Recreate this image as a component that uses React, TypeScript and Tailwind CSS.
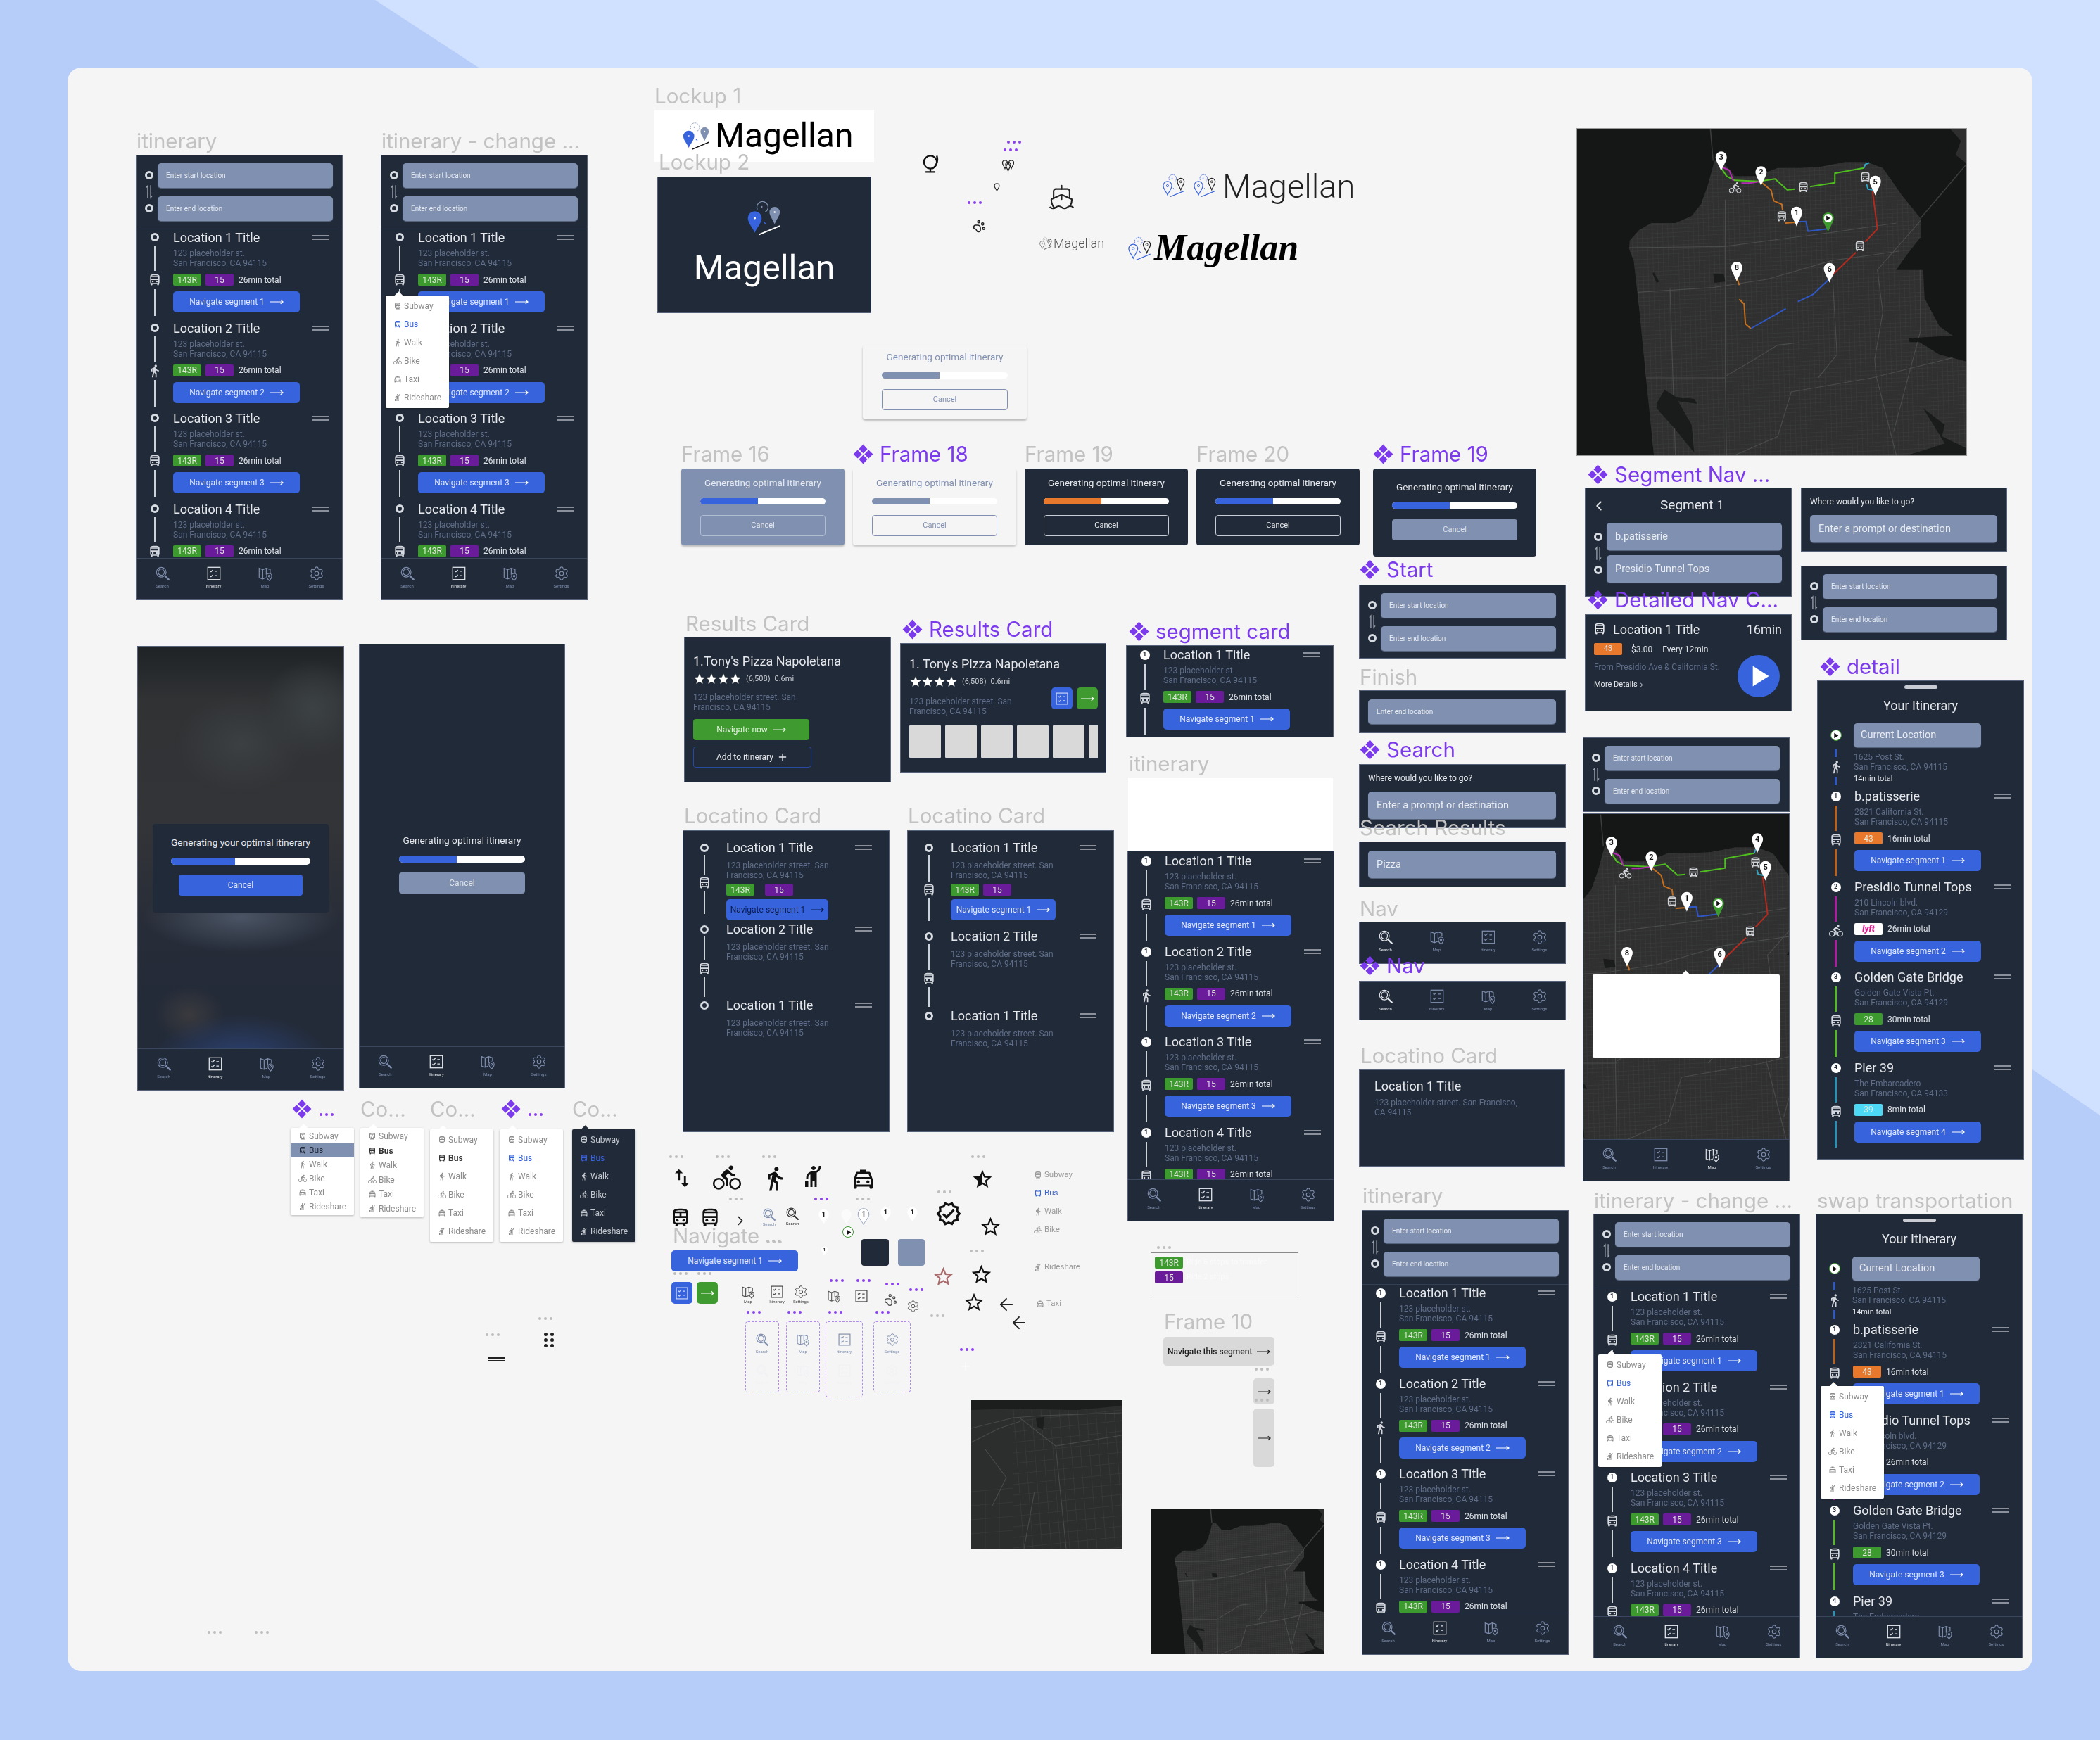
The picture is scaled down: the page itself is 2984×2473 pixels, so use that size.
import React from 'react';
import { Settings, Plus, ChevronLeft, ChevronRight, ArrowLeft, Ship, PawPrint } from 'lucide-react';
import {
  MdOutlineDirectionsBus, MdOutlineDirectionsSubway, MdDirectionsWalk, MdOutlineDirectionsBike,
  MdOutlineLocalTaxi, MdOutlineHail, MdSwapVert, MdStar, MdOutlineStarBorder, MdOutlineStarHalf,
  MdOutlineVerified, MdOutlineTrain, MdPlayArrow,
} from 'react-icons/md';

type K = React.ReactNode;

function At({ x, y, w, h, className = '', children }: { x: number; y: number; w?: number; h?: number; className?: string; children?: K }) {
  return <div className={'absolute ' + className} style={{ left: x, top: y, width: w, height: h }}>{children}</div>;
}

function Diamonds({ className = '' }: { className?: string }) {
  return (
    <svg viewBox="0 0 24 24" className={className} fill="#7c3aed">
      <path d="M12 .5 17 6l-5 5-5-5zM12 13l5 5-5 5.5-5-5.5zM5.500 7 10.500 12l-5 5L.5 12zM18.500 7l5 5-5 5-5-5z" />
    </svg>
  );
}

function LabelText({ text, purple }: { text: string; purple?: boolean }) {
  return (
    <div className={'flex items-center whitespace-nowrap h-[36px] text-[29.5px] leading-[36px] [font-family:Inter,sans-serif] ' + (purple ? 'text-[#7c3aed]' : 'text-[#c2c2c2]')}>
      {purple && <Diamonds className="w-[29px] h-[29px] mr-[9px] shrink-0" />}
      {text}
    </div>
  );
}

function Label({ x, y, text, purple }: { x: number; y: number; text: string; purple?: boolean }) {
  return <At x={x} y={y - 18}><LabelText text={text} purple={purple} /></At>;
}

function Dots({ x, y, purple }: { x: number; y: number; purple?: boolean }) {
  const c = purple ? 'bg-[#8b3ff0]' : 'bg-[#bdbdbd]';
  return (
    <At x={x} y={y - 2} className="flex gap-[4px]">
      <span className={'w-[4px] h-[4px] rounded-full ' + c} />
      <span className={'w-[4px] h-[4px] rounded-full ' + c} />
      <span className={'w-[4px] h-[4px] rounded-full ' + c} />
    </At>
  );
}

function SearchIcon({ className = '' }: { className?: string }) {
  return (
    <svg viewBox="0 0 24 24" fill="none" stroke="currentColor" strokeWidth="1.3" className={className}>
      <circle cx="10" cy="10" r="7.500" />
      <circle cx="10" cy="10" r="4.800" />
      <path d="M15.800 15.800 21.500 21.500" strokeWidth="2.600" strokeLinecap="round" />
    </svg>
  );
}
function MapIcon({ className = '' }: { className?: string }) {
  return (
    <svg viewBox="0 0 24 24" fill="none" stroke="currentColor" strokeWidth="1.3" className={className}>
      <path d="M13 18.500 8 20.500 2.500 18.500V4L8 6l5.500-2 6 2v5" />
      <path d="M8 6v14.500M13.500 4v10" />
      <path d="M18 23s-4-3.800-4-7a4 4 0 0 1 8 0c0 3.200-4 7-4 7z" />
      <circle cx="18" cy="16" r="1.300" />
    </svg>
  );
}
function ListIcon({ className = '' }: { className?: string }) {
  return (
    <svg viewBox="0 0 24 24" fill="none" stroke="currentColor" strokeWidth="1.400" className={className}>
      <rect x="2.500" y="2.500" width="19" height="19" />
      <path d="m6 8 1.500 1.500L10.500 6.500M13.500 8.500h4M6 15.500 7.500 17l3-3M13.500 15.500h4" />
    </svg>
  );
}
function GearIcon({ className = '' }: { className?: string }) {
  return <Settings className={className} strokeWidth={1.2} />;
}
function SwapV() {
  return (
    <svg viewBox="0 0 12 24" fill="none" stroke="#9aa0ac" strokeWidth="1.600" className="w-[10px] h-[21px]">
      <path d="M3.500 23V2L1 5M8.500 1v21l2.500-3" />
    </svg>
  );
}

function LongArrow({ className = '' }: { className?: string }) {
  return (
    <svg viewBox="0 0 20 8" fill="none" stroke="currentColor" strokeWidth="1.300" className={'w-[19px] h-[8px] shrink-0 ' + className}>
      <path d="M0 4h18.500M15.500 1l3.500 3-3.500 3" />
    </svg>
  );
}

function Ring() {
  return <span className="block w-[12px] h-[12px] rounded-full border-[3px] border-[#d7dbe2] shrink-0" />;
}
function Num({ n = '1' }: { n?: string }) {
  return <span className="flex items-center justify-center w-[14px] h-[14px] rounded-full bg-white text-[#202a38] text-[9px] font-bold shrink-0">{n}</span>;
}
function PlayMark() {
  return (
    <span className="flex items-center justify-center w-[16px] h-[16px] rounded-full bg-white border-[1.5px] border-[#3d9a2f] text-[#111] shrink-0">
      <MdPlayArrow className="w-[13px] h-[13px]" />
    </span>
  );
}

function Input({ children, big, className = '' }: { children: K; big?: boolean; className?: string }) {
  return (
    <div className={'flex items-center rounded-[5px] bg-[#8090b0] text-[#e9ecf2] pl-[12px] shadow-[0_1px_1px_#5d6a85] ' + (big ? 'text-[14.5px] ' : 'text-[10px] ') + className}>
      {children}
    </div>
  );
}

function Header({ a = 'Enter start location', b = 'Enter end location' }: { a?: string; b?: string }) {
  return (
    <div className="flex h-[105px] shrink-0 border-b border-[#333f55] pt-[11px] pl-[12px] pr-[13px]">
      <div className="flex flex-col items-center w-[12px] mr-[6px] pt-[11px]">
        <Ring />
        <div className="h-[35px] flex items-center"><SwapV /></div>
        <Ring />
      </div>
      <div className="flex-1 flex flex-col gap-[12px]">
        <Input className="h-[35px]">{a}</Input>
        <Input className="h-[35px]">{b}</Input>
      </div>
    </div>
  );
}

const NAV: Record<string, [string, (p: { className?: string }) => React.ReactElement]> = {
  s: ['Search', SearchIcon],
  i: ['Itinerary', ListIcon],
  m: ['Map', MapIcon],
  g: ['Settings', GearIcon],
};

function Nav({ order = 'simg', active = 'i', top = true }: { order?: string; active?: string; top?: boolean }) {
  return (
    <div className={'grid grid-cols-4 h-[59px] shrink-0 ' + (top ? 'border-t border-[#3b475e]' : '')}>
      {order.split('').map((k) => {
        const [name, Ico] = NAV[k];
        const on = k === active;
        return (
          <div key={k} className={'flex flex-col items-center pt-[10px] ' + (on ? 'text-[#e4e7ec]' : 'text-[#7f8eaf]')}>
            <Ico className="w-[22px] h-[22px]" />
            <span className="text-[6px] leading-[9px] mt-[2px]">{name}</span>
          </div>
        );
      })}
    </div>
  );
}

function Badge({ t, c }: { t: K; c: string }) {
  return <span className={'flex items-center justify-center w-[40px] h-[17px] rounded-[2px] text-[12px] text-[#dfe6da] ' + c}>{t}</span>;
}

const GREEN = 'bg-[#3d9a2f]';
const PURPLE = 'bg-[#6a1b9a]';

function Navigate({ n, className = 'w-[180px]', dark }: { n: string; className?: string; dark?: boolean }) {
  return (
    <div className={'flex items-center justify-center gap-[8px] h-[30px] rounded-[5px] bg-[#3763dc] text-[12px] whitespace-nowrap ' + (dark ? 'text-[#0b1b4a] ' : 'text-[#e3e9fb] ') + className}>
      <span>Navigate segment {n}</span>
      <LongArrow className={dark ? 'text-[#0b1b4a]' : 'text-white'} />
    </div>
  );
}

function Menu() {
  return (
    <div className="flex flex-col gap-[3px] pt-[8px] w-[24px]">
      <span className="h-[2px] bg-[#8b909a]" />
      <span className="h-[2px] bg-[#8b909a]" />
    </div>
  );
}

const ICONS: Record<string, (p: { className?: string }) => React.ReactElement> = {
  bus: MdOutlineDirectionsBus as never,
  sub: MdOutlineDirectionsSubway as never,
  walk: MdDirectionsWalk as never,
  bike: MdOutlineDirectionsBike as never,
};

function Row({ marker, title, a1, a2, icon = 'bus', line = 'bg-[#cdd1d8]', badges, time = '26min total', n, upto = 4 }: {
  marker: K; title: string; a1?: string; a2?: string; icon?: string; line?: string; badges?: K; time?: string; n: string; upto?: number;
}) {
  const I = ICONS[icon];
  return (
    <div className="flex h-[128.6px] shrink-0 pl-[18px] pr-[18px]">
      <div className="flex flex-col items-center w-[15px] mr-[19px] pt-[5px]">
        {marker}
        <span className={'w-[2px] h-[36px] mt-[6px] ' + line} />
        <I className="w-[20px] h-[20px] my-[3px] text-[#d5d8de] shrink-0" />
        <span className={'w-[2px] h-[38px] ' + line} />
      </div>
      <div className="flex-1 min-w-0">
        <div className="flex justify-between h-[24px]">
          <span className="text-[18px] leading-[24px] text-[#e6e8ec] whitespace-nowrap">{title}</span>
          <Menu />
        </div>
        <div className="mt-[3px] text-[12px] leading-[14px] text-[#5f6d8a] whitespace-nowrap">
          <div>{a1 ?? '123 placeholder st.'}</div>
          {upto > 1 && <div>{a2 ?? 'San Francisco, CA 94115'}</div>}
        </div>
        {upto > 2 && (
          <div className="flex items-center gap-[6px] mt-[8px] h-[17px]">
            {badges ?? (<><Badge t="143R" c={GREEN} /><Badge t="15" c={PURPLE} /></>)}
            <span className="text-[12px] text-[#dfe2e7] ml-[1px]">{time}</span>
          </div>
        )}
        {upto > 3 && <Navigate n={n} className="w-[180px] mt-[8px]" />}
      </div>
    </div>
  );
}

const TRANSPORT: [string, any][] = [
  ['Subway', MdOutlineDirectionsSubway], ['Bus', MdOutlineDirectionsBus], ['Walk', MdDirectionsWalk],
  ['Bike', MdOutlineDirectionsBike], ['Taxi', MdOutlineLocalTaxi], ['Rideshare', MdOutlineHail],
];

function Dropdown({ item = 'h-[26px]', bus = 'text-[#3763dc]', bg = 'bg-white', text = 'text-[#8b8b8b]', caret = 'bg-white', className = '' }: {
  item?: string; bus?: string; bg?: string; text?: string; caret?: string; className?: string;
}) {
  return (
    <div className={'w-[90px] flex flex-col pt-[2px] pb-[2px] rounded-[2px] shadow-[0_1px_3px_rgba(0,0,0,.25)] relative ' + bg + ' ' + className}>
      <span className={'absolute -top-[4px] left-[14px] w-[9px] h-[9px] rotate-45 ' + caret} />
      {TRANSPORT.map(([t, I]) => (
        <div key={t} className={'relative flex items-center pl-[11px] gap-[3px] text-[12px] whitespace-nowrap ' + item + ' ' + (t === 'Bus' ? bus : text)}>
          <I className="w-[12px] h-[12px] shrink-0" />{t}
        </div>
      ))}
    </div>
  );
}

function Itin({ num, menu, x, y, nav = 'i', h = 631, white }: { num?: boolean; menu?: boolean; x: number; y: number; nav?: string; h?: number; white?: boolean }) {
  const marker = num ? <Num /> : <Ring />;
  const L = ['Location 1 Title', 'Location 2 Title', 'Location 3 Title', 'Location 4 Title'];
  return (
    <At x={x} y={y} w={292} h={h} className="bg-[#212a38] flex flex-col overflow-hidden shadow-[0_0_0_1px_#56627a]">
      {!white && <Header />}
      <div className={'flex-1 min-h-0 overflow-hidden relative ' + (white ? 'pt-[2px]' : '')}>
        {L.map((t, i) => (
          <Row key={t} marker={marker} title={t} icon={i === 1 ? 'walk' : 'bus'} n={String(i + 1)} upto={i === 3 ? 3 : 4} />
        ))}
        {menu && <Dropdown className="!absolute left-[6px] top-[94px]" />}
      </div>
      <Nav active={nav} />
    </At>
  );
}

const DETAIL = [
  { t: 'b.patisserie', a1: '2821 California St.', a2: 'San Francisco, CA 94115', i: 'bus', l: 'bg-[#b8621f]', b: <Badge t="43" c="bg-[#e8792c]" />, tm: '16min total' },
  { t: 'Presidio Tunnel Tops', a1: '210 Lincoln blvd.', a2: 'San Francisco, CA 94129', i: 'bike', l: 'bg-[#a8209a]', b: <span className="flex items-center justify-center w-[40px] h-[17px] bg-white rounded-[2px] text-[#e0188a] text-[12px] font-black italic">lyft</span>, tm: '26min total' },
  { t: 'Golden Gate Bridge', a1: 'Golden Gate Vista Pt.', a2: 'San Francisco, CA 94129', i: 'bus', l: 'bg-[#5ab52e]', b: <Badge t="28" c={GREEN} />, tm: '30min total' },
  { t: 'Pier 39', a1: 'The Embarcadero', a2: 'San Francisco, CA 94133', i: 'bus', l: 'bg-[#2e8fb0]', b: <Badge t="39" c="bg-[#4dd9f5]" />, tm: '8min total' },
];

function Detail({ x, y, h, nav, menu }: { x: number; y: number; h: number; nav?: boolean; menu?: boolean }) {
  return (
    <At x={x} y={y} w={292} h={h} className="bg-[#212a38] flex flex-col overflow-hidden shadow-[0_0_0_1px_#56627a]">
      <div className="h-[152px] shrink-0 flex flex-col items-center">
        <span className="mt-[6px] w-[47px] h-[5px] rounded-full bg-[#c9ccd2]" />
        <span className="mt-[12px] text-[18px] leading-[24px] text-[#e6e8ec]">Your Itinerary</span>
        <div className="w-full flex pl-[18px] mt-[13px]">
          <div className="flex flex-col items-center w-[15px] mr-[18px]">
            <div className="h-[34px] flex items-center"><PlayMark /></div>
            <span className="w-[3px] h-[12px] mt-[2px] bg-[#3058c0]" />
            <MdDirectionsWalk className="w-[20px] h-[22px] my-[3px] text-[#d5d8de] shrink-0" />
            <span className="w-[3px] h-[12px] bg-[#3058c0]" />
          </div>
          <div className="flex-1">
            <Input big className="w-[181px] h-[34px] !pl-[10px]">Current Location</Input>
            <div className="mt-[7px] text-[12px] leading-[14px] text-[#5f6d8a] whitespace-nowrap">
              <div>1625 Post St.</div><div>San Francisco, CA 94115</div>
            </div>
            <div className="mt-[3px] text-[11px] leading-[14px] text-[#e2e4e8]">14min total</div>
          </div>
        </div>
      </div>
      <div className="flex-1 min-h-0 overflow-hidden relative">
        {DETAIL.map((d, i) => (
          <Row key={d.t} marker={<Num n={String(i + 1)} />} title={d.t} a1={d.a1} a2={d.a2} icon={d.i} line={d.l + ' !w-[3px]'} badges={d.b} time={d.tm} n={String(i + 1)} upto={nav && i === 3 ? 1 : 4} />
        ))}
        {menu && <Dropdown className="!absolute left-[6px] top-[92px]" />}
      </div>
      {nav && <Nav />}
    </At>
  );
}

function Gen({ size = 'w-[232px] h-[109px]', bg, text, fill = 'bg-[#3763dc]', btn, pt = 'pt-[12px]', shadow = '' }: {
  size?: string; bg: string; text: string; fill?: string; btn: string; pt?: string; shadow?: string;
}) {
  return (
    <div className={'flex flex-col rounded-[4px] px-[27px] ' + size + ' ' + bg + ' ' + pt + ' ' + shadow}>
      <div className={'text-[13.5px] leading-[16px] text-center whitespace-nowrap ' + text}>Generating optimal itinerary</div>
      <div className="flex h-[9px] mt-[14px] rounded-full overflow-hidden bg-white shrink-0"><span className={'w-[46%] ' + fill} /></div>
      <div className={'flex items-center justify-center h-[30px] mt-[15px] rounded-[4px] text-[11px] ' + btn}>Cancel</div>
    </div>
  );
}

function tear(cx: number, cy: number, r: number, h: number) {
  return `M${cx} ${cy + h}C${cx - r * 0.35} ${cy + h * 0.6} ${cx - r} ${cy + r * 0.7} ${cx - r} ${cy}A${r} ${r} 0 1 1 ${cx + r} ${cy}C${cx + r} ${cy + r * 0.7} ${cx + r * 0.35} ${cy + h * 0.6} ${cx} ${cy + h}Z`;
}

function Logo({ outline, dark, lineColor = '#111', className = '' }: { outline?: boolean; dark?: boolean; lineColor?: string; className?: string }) {
  return (
    <svg viewBox="0 0 44 44" className={className} fill="none">
      <path d="M14 12a6.500 6.500 0 1 1 9 3" stroke={outline ? '#3763dc' : '#8090b0'} strokeWidth="1" strokeDasharray={dark ? '0' : '2 1'} />
      <circle cx="19" cy="9" r="1" fill={outline ? '#3763dc' : '#8090b0'} />
      {outline ? (
        <>
          <path d={tear(11, 22, 7.500, 16)} stroke="#3763dc" strokeWidth="1.500" />
          <circle cx="11" cy="22" r="2" stroke="#3763dc" />
          <path d={tear(34, 15, 6, 14)} stroke="#222" strokeWidth="1.500" />
          <circle cx="34" cy="15" r="1.800" stroke="#222" />
        </>
      ) : (
        <>
          <path d={tear(11, 22, 8, 17)} fill="#3763dc" />
          <circle cx="11" cy="22" r="1.300" fill="#fff" />
          <path d={tear(34, 15, 6, 14)} fill="#8090b0" />
          <circle cx="34" cy="15" r="1" fill="#fff" />
        </>
      )}
      <path d="M21 26l2.500 2.500" stroke="#3763dc" strokeWidth="1.200" />
      <path d="M16 41 40 31" stroke={lineColor} strokeWidth="1.500" />
    </svg>
  );
}

const LAND = 'M340 1430L310 1090 285 800 265 600 248 550 250 515 285 470 330 440 420 440 480 410 515 360 540 280 565 175 590 170 640 240 720 240 800 205 880 205 960 200 1050 180 1130 180 1190 205 1260 320 1330 420 1330 500 1270 590 1240 640 1340 640 1345 760 1400 880 1450 920 1300 930 1400 1000 1500 1030V1430Z';
const MAJOR = [
  'M250 545L600 540 1000 480 1240 440', 'M280 735L560 715 760 680 1000 600 1250 560', 'M605 340V1100L610 1430',
  'M1165 1090L1240 1430', 'M1165 1090 1160 1020 1190 820 1170 640 1330 430', 'M1500 1000 1150 1100 1000 1130 850 1160 800 1350 640 1430',
  'M1330 500V900L1230 1330', 'M310 1100H610', 'M610 1090 700 1030 800 960 880 950', 'M400 720 420 1430', 'M1000 600 1020 1000 950 1100',
];
const ROUTES: [string, string][] = [
  ['#4fbf1f', 'M590 205 610 240 640 258 730 262 790 252 835 298 865 295M920 285 1012 268V228L1120 205'],
  ['#b32cb0', 'M590 200 620 215 635 260M665 270 695 270 738 262'],
  ['#c6701f', 'M738 265 775 300 785 345 815 360 818 385M828 440 870 437'],
  ['#2f57c4', 'M870 435 905 433 912 475 985 465'],
  ['#2fa7c9', 'M1120 205 1125 190 1140 183M1130 275 1135 295 1160 300'],
  ['#b52a1f', 'M1152 305 1170 465 1125 520M1090 565 995 670'],
  ['#2f57c4', 'M995 675 930 745 875 775M830 805 700 890'],
  ['#c6701f', 'M648 670 657 705M657 765 675 785 680 870 700 890'],
];
const SX = 1 / 0.3827;
const SY = 1 / 0.3333;

function MapPin({ x, y, n, green }: { x: number; y: number; n?: string; green?: boolean }) {
  return (
    <g transform={`translate(${x} ${y}) scale(${SX} ${SY})`}>
      <path d={tear(0, -2, 8, 20)} fill={green ? '#3d9a2f' : '#fff'} />
      {green && <circle cx="0" cy="-2" r="6" fill="#fff" />}
      {green ? <path d="M-2.500-5.500 3-2l-5.500 3.500z" fill="#111" /> :
        <text x="0" y="2" textAnchor="middle" fontSize="11" fontWeight="700" fill="#111" fontFamily="Roboto">{n}</text>}
    </g>
  );
}
function MapGlyph({ x, y, bike }: { x: number; y: number; bike?: boolean }) {
  const I = bike ? MdOutlineDirectionsBike : MdOutlineDirectionsBus;
  return (
    <g transform={`translate(${x} ${y}) scale(${SX} ${SY})`}>
      <foreignObject x="-9" y="-9" width="18" height="18"><I className="w-[18px] h-[18px] text-[#cfd2d6]" /></foreignObject>
    </g>
  );
}

function SFMap({ id, routes, four }: { id: string; routes?: boolean; four?: boolean }) {
  const vs: number[] = [];
  for (let i = 0; i < 68; i++) vs.push(250 + i * 19);
  const hs: number[] = [];
  for (let i = 0; i < 72; i++) hs.push(190 + i * 18);
  return (
    <svg viewBox="55 38 1445 1392" preserveAspectRatio="none" className="block w-full h-full bg-[#151717]">
      <clipPath id={id}><path d={LAND} /></clipPath>
      <path d="M550 40 560 175M1330 420 1500 190" stroke="#3d3d3d" strokeWidth="1.500" vectorEffect="non-scaling-stroke" />
      <path d="M1440 38H1500V185L1460 150 1480 90Z" fill="#2e2e2e" />
      <path d={LAND} fill="#303030" />
      <g clipPath={`url(#${id})`} fill="none">
        <g stroke="#3f4040" strokeWidth=".5">
          {vs.map((x) => <path key={x} d={`M${x} 100L${x + 30} 1430`} vectorEffect="non-scaling-stroke" />)}
          {hs.map((y) => <path key={y} d={`M240 ${y + 30}L1500 ${y - 40}`} vectorEffect="non-scaling-stroke" />)}
        </g>
        {MAJOR.map((d) => <path key={d} d={d} stroke="#4a4b4b" strokeWidth="1.200" vectorEffect="non-scaling-stroke" />)}
        <path d="M350 1210 380 1150 420 1180 490 1190 500 1210 430 1200 480 1300 490 1420 420 1320 350 1230Z" fill="#1a1b1b" />
        <path d="M1340 1230 1420 1300 1410 1350 1500 1400V1430H1280L1340 1410 1420 1380Z" fill="#1a1b1b" />
        <path d="M1285 930H1400L1400 948H1290Z" fill="#151717" />
        <path d="M560 655 600 660 605 690 565 695ZM340 650 360 690 350 695 335 655Z" fill="#1a1b1b" />
      </g>
      {routes && (
        <>
          <g fill="none" strokeWidth="2" strokeLinejoin="round">
            {ROUTES.map(([c, d]) => <path key={d} d={d} stroke={c} vectorEffect="non-scaling-stroke" />)}
          </g>
          <MapGlyph x={895} y={288} /><MapGlyph x={815} y={412} /><MapGlyph x={1125} y={245} /><MapGlyph x={1105} y={540} /><MapGlyph x={642} y={290} bike />
          <MapPin x={590} y={165} n="3" /><MapPin x={738} y={228} n="2" /><MapPin x={870} y={400} n="1" /><MapPin x={1162} y={268} n="5" />
          <MapPin x={648} y={635} n="8" /><MapPin x={992} y={640} n="6" /><MapPin x={987} y={425} green />
          {four && <MapPin x={1132} y={150} n="4" />}
        </>
      )}
    </svg>
  );
}

function Tile() {
  const vs: number[] = [];
  for (let i = 0; i < 18; i++) vs.push(i * 13);
  const hs: number[] = [];
  for (let i = 0; i < 14; i++) hs.push(20 + i * 15);
  return (
    <svg viewBox="0 0 214 211" className="block w-full h-full bg-[#2c2d2d]">
      <path d="M0 0H214V8L150 14 60 12 0 14Z" fill="#1c1d1d" />
      <g stroke="#3f4040" strokeWidth=".6" fill="none">
        {vs.map((x) => <path key={x} d={`M${x + 60} 14L${x + 75} 211`} />)}
        {hs.map((y) => <path key={y} d={`M60 ${y + 10}L214 ${y - 6}`} />)}
        <path d="M0 130 60 125M0 150 60 145M0 170 60 165M0 190 60 185M20 130V211M40 130V211" />
      </g>
      <g stroke="#484949" strokeWidth="1.200" fill="none">
        <path d="M0 40 60 25 100 22 214 18M70 26 120 65 214 50M0 60 40 40 70 30M30 150 50 110 20 70M120 65 135 211M90 130 75 211" />
      </g>
      <path d="M92 25 104 24 102 42 94 38Z" fill="#1c1d1d" />
    </svg>
  );
}

function SmallPin({ x, y, n = '1', w = 17, h = 22, fill = '#fff', stroke }: { x: number; y: number; n?: string; w?: number; h?: number; fill?: string; stroke?: string }) {
  return (
    <At x={x} y={y} w={w} h={h}>
      <svg viewBox="0 0 18 24" className="block w-full h-full">
        <path d={tear(9, 8.500, 7.800, 15)} fill={fill} stroke={stroke} strokeWidth=".8" />
        {n && <text x="9" y="12" textAnchor="middle" fontSize="10" fontWeight="700" fill="#111" fontFamily="Roboto">{n}</text>}
      </svg>
    </At>
  );
}

function Stars() {
  return (
    <span className="flex -space-x-[1px] text-white">
      <MdStar className="w-[18px] h-[18px]" /><MdStar className="w-[18px] h-[18px]" /><MdStar className="w-[18px] h-[18px]" /><MdStar className="w-[18px] h-[18px]" />
    </span>
  );
}

function ListSquare({ x, y, w = 30, h = 31 }: { x: number; y: number; w?: number; h?: number }) {
  return (
    <At x={x} y={y} w={w} h={h} className="flex items-center justify-center rounded-[5px] bg-[#3763dc] text-[#cdd9f7]">
      <ListIcon className="w-[20px] h-[20px]" />
    </At>
  );
}
function GoSquare({ x, y, w = 30, h = 31 }: { x: number; y: number; w?: number; h?: number }) {
  return (
    <At x={x} y={y} w={w} h={h} className="flex items-center justify-center rounded-[5px] bg-[#3f9a2f] text-white">
      <LongArrow />
    </At>
  );
}

function Dashed({ size, icon: I, label }: { size: string; icon: (p: { className?: string }) => React.ReactElement; label: string }) {
  return (
    <div className={'rounded-[4px] border border-dashed border-[#b48af0] flex flex-col items-center pt-[14px] text-[#8090b0] ' + size}>
      <I className="w-[20px] h-[22px]" />
      <span className="text-[6px] leading-[10px] mt-[1px]">{label}</span>
      <div className="mt-[11px] flex flex-col items-center text-[#f0f1f4]">
        <I className="w-[20px] h-[22px]" />
        <span className="text-[6px] leading-[10px] mt-[1px]">{label}</span>
      </div>
    </div>
  );
}

function TextItem({ x, y, t, I, c = 'text-[#9a9a9a]' }: { x: number; y: number; t: string; I: any; c?: string }) {
  return (
    <At x={x} y={y - 7} className={'flex items-center h-[14px] gap-[3px] text-[11.5px] whitespace-nowrap ' + c}>
      <I className="w-[12px] h-[12px]" />{t}
    </At>
  );
}

function LocCard({ x, btn, dark }: { x: number; btn: string; dark?: boolean }) {
  const Addr = () => (
    <div className="mt-[6px] text-[12px] leading-[14px] text-[#5f6d8a] whitespace-nowrap">
      <div>123 placeholder street. San</div><div>Francisco, CA 94115</div>
    </div>
  );
  const Title = ({ t }: { t: string }) => (
    <div className="flex justify-between pr-[24px]">
      <span className="text-[18px] leading-[24px] text-[#e6e8ec]">{t}</span>
      <Menu />
    </div>
  );
  const V = ({ c }: { c: string }) => <span className={'w-[2px] bg-[#cdd1d8] ' + c} />;
  const B = () => <MdOutlineDirectionsBus className="w-[20px] h-[20px] my-[2px] text-[#d5d8de] shrink-0" />;
  const rows = dark
    ? [['h-[116px]', 'h-[28px]', 'h-[32px]'], ['h-[108px]', 'h-[38px]', 'h-[32px]'], ['h-[90px]', '', '']]
    : [['h-[126px]', 'h-[38px]', 'h-[32px]'], ['h-[113px]', 'h-[38px]', 'h-[28px]'], ['h-[90px]', '', '']];
  return (
    <At x={x} y={1181} w={292} h={427} className="bg-[#212a38] pt-[12px] pl-[24px] shadow-[0_0_0_1px_#56627a]">
      {rows.map((r, i) => (
        <div key={i} className={'flex ' + r[0]}>
          <div className="flex flex-col items-center w-[12px] mr-[25px] pt-[6px]">
            <Ring />
            {r[1] && <><V c={r[1] + ' mt-[4px]'} /><B /><V c={r[2]} /></>}
          </div>
          <div className="flex-1">
            <Title t={i === 2 ? 'Location 1 Title' : `Location ${i + 1} Title`} />
            <Addr />
            {i === 0 && (
              <>
                <div className={'flex mt-[5px] ' + (dark ? 'gap-[15px]' : 'gap-[6px]')}><Badge t="143R" c={GREEN} /><Badge t="15" c={PURPLE} /></div>
                <Navigate n="1" className={btn + ' mt-[5px]'} dark={dark} />
              </>
            )}
          </div>
        </div>
      ))}
    </At>
  );
}

function IconLabel({ x, y, c, name, I }: { x: number; y: number; c: string; name: string; I: (p: { className?: string }) => React.ReactElement }) {
  return (
    <At x={x} y={y} w={22} className={'flex flex-col items-center ' + c}>
      <I className="w-[20px] h-[20px]" />
      <span className="text-[6px] leading-[8px] whitespace-nowrap">{name}</span>
    </At>
  );
}

export default function App() {
  return (
    <div className="relative w-[2984px] h-[2473px] overflow-hidden bg-[#b6cdf9] [font-family:Roboto,sans-serif]">
      <div className="absolute inset-0 bg-[#d0e0ff] [clip-path:polygon(533px_0,2984px_0,2984px_1585px,2888px_1520px,2000px_1000px,1000px_305px)]" />
      <div className="absolute left-[96px] top-[96px] w-[2792px] h-[2279px] rounded-[20px] bg-[#f5f5f5]" />
      <div className="absolute inset-0 blur-[0.7px]">
        {/* itinerary top */}
        <Label x={194} y={200} text="itinerary" />
        <Label x={542} y={200} text="itinerary - change ..." />
        <Itin x={194} y={221} />
        <Itin x={542} y={221} menu />

        {/* lockups */}
        <Label x={930} y={136} text="Lockup 1" />
        <At x={930} y={156} w={312} h={74} className="bg-white flex items-center pl-[38px] gap-[5px]">
          <Logo className="w-[43px] h-[43px]" />
          <span className="text-[48px] leading-[54px] text-black">Magellan</span>
        </At>
        <Label x={936} y={230} text="Lockup 2" />
        <At x={935} y={252} w={302} h={192} className="bg-[#212a38] flex flex-col items-center pt-[31px] shadow-[0_0_0_1px_#56627a]">
          <Logo dark lineColor="#fff" className="w-[54px] h-[54px]" />
          <span className="text-[49px] leading-[54px] text-white mt-[17px]">Magellan</span>
        </At>
        <At x={1308} y={218} w={28} h={32}>
          <svg viewBox="0 0 24 28" fill="none" stroke="#111" strokeWidth="2" className="block w-full h-full">
            <circle cx="12" cy="11" r="8" /><path d="M6 23h12M12 19v4M20 3c2 6 0 13-6 16" />
          </svg>
        </At>
        <Dots x={1431} y={202} purple /><Dots x={1426} y={213} purple />
        <At x={1423} y={226} w={19} h={18}>
          <svg viewBox="0 0 20 20" fill="none" stroke="#222" strokeWidth="1.400" className="block w-full h-full">
            <path d={tear(5, 6, 4, 9)} /><path d={tear(15, 6, 4, 9)} /><path d={tear(10, 9, 4, 10)} />
          </svg>
        </At>
        <At x={1411} y={260} w={11} h={12}>
          <svg viewBox="0 0 12 14" fill="none" stroke="#333" strokeWidth="1.400" className="block w-full h-full"><path d={tear(6, 5, 4, 8)} /></svg>
        </At>
        <Dots x={1375} y={288} purple />
        <At x={1382} y={312} w={19} h={19} className="text-[#222]"><PawPrint className="w-full h-full" strokeWidth={2} /></At>
        <At x={1489} y={260} w={39} h={40} className="text-[#222]"><Ship className="w-full h-full" strokeWidth={1.300} /></At>
        <At x={1476} y={336} className="flex items-center gap-[1px] text-[#555]">
          <Logo outline className="w-[20px] h-[20px] grayscale" />
          <span className="text-[18px] leading-[20px] font-light">Magellan</span>
        </At>
        <At x={1650} y={245} className="flex items-center gap-[8px]">
          <Logo outline lineColor="#3763dc" className="w-[36px] h-[38px]" />
          <Logo outline lineColor="#3763dc" className="w-[36px] h-[38px]" />
        </At>
        <At x={1737} y={235} className="text-[47px] leading-[60px] font-light text-[#222] whitespace-nowrap">Magellan</At>
        <At x={1601} y={335}><Logo outline lineColor="#3763dc" className="w-[37px] h-[37px]" /></At>
        <At x={1640} y={316} className="text-[52px] leading-[72px] font-bold italic text-black whitespace-nowrap [font-family:'Liberation_Serif',serif]">Magellan</At>

        {/* generating */}
        <At x={1226} y={491}>
          <Gen size="w-[233px] h-[105px]" bg="bg-[#f5f5f5]" text="text-[#8090b0]" fill="bg-[#8090b0]" btn="border border-[#8090b0] text-[#8090b0]" pt="pt-[8px]" shadow="shadow-[0_2px_3px_rgba(0,0,0,.25)]" />
        </At>
        <At x={968} y={627} className="flex gap-[12px]">
          <div className="flex flex-col gap-[3px]">
            <LabelText text="Frame 16" />
            <Gen bg="bg-[#8090b0]" text="text-[#e6e9ef]" btn="border border-[#b3bdd2] text-[#e6e9ef]" shadow="shadow-[0_2px_3px_rgba(0,0,0,.25)]" />
          </div>
          <div className="flex flex-col gap-[3px]">
            <LabelText text="Frame 18" purple />
            <Gen bg="bg-[#f5f5f5]" text="text-[#8090b0]" fill="bg-[#8090b0]" btn="border border-[#8090b0] text-[#8090b0]" shadow="shadow-[0_2px_3px_rgba(0,0,0,.2)]" />
          </div>
          <div className="flex flex-col gap-[3px]">
            <LabelText text="Frame 19" />
            <Gen bg="bg-[#212a38]" text="text-[#e6e8ec]" fill="bg-[#e8792c]" btn="border border-[#c9ccd2] text-[#e6e8ec]" />
          </div>
          <div className="flex flex-col gap-[3px]">
            <LabelText text="Frame 20" />
            <Gen bg="bg-[#212a38]" text="text-[#e6e8ec]" btn="border border-[#c9ccd2] text-[#e6e8ec]" />
          </div>
          <div className="flex flex-col gap-[3px] ml-[7px]">
            <LabelText text="Frame 19" purple />
            <Gen size="w-[232px] h-[125px]" bg="bg-[#212a38]" text="text-[#e6e8ec]" btn="bg-[#8090b0] text-[#dfe3ea]" pt="pt-[18px]" />
          </div>
        </At>

        {/* results */}
        <Label x={974} y={886} text="Results Card" />
        <At x={973} y={906} w={292} h={205} className="bg-[#212a38] pt-[22px] px-[12px] shadow-[0_0_0_1px_#56627a]">
          <div className="text-[18px] leading-[24px] text-[#e6e8ec] whitespace-nowrap">1.Tony's Pizza Napoletana</div>
          <div className="flex items-center gap-[6px] mt-[4px] text-[11px] text-[#c9ccd2]"><Stars /><span>(6,508)</span><span>0.6mi</span></div>
          <div className="mt-[10px] text-[12px] leading-[14px] text-[#5f6d8a]"><div>123 placeholder street. San</div><div>Francisco, CA 94115</div></div>
          <div className="flex items-center justify-center gap-[7px] w-[165px] h-[30px] mt-[10px] rounded-[4px] bg-[#3f9a2f] text-[12px] text-[#e6f0e3]">Navigate now <LongArrow /></div>
          <div className="flex items-center justify-center gap-[5px] w-[168px] h-[30px] mt-[9px] rounded-[4px] border border-[#274a9e] text-[12px] text-[#e6e8ec]">Add to itinerary <Plus className="w-[16px] h-[16px]" /></div>
        </At>
        <Label x={1282} y={894} text="Results Card" purple />
        <At x={1280} y={915} w={291} h={182} className="bg-[#212a38] pt-[17px] pl-[12px] pr-[11px] shadow-[0_0_0_1px_#56627a] overflow-hidden">
          <div className="text-[18px] leading-[24px] text-[#e6e8ec] whitespace-nowrap">1. Tony's Pizza Napoletana</div>
          <div className="flex items-center gap-[6px] mt-[4px] text-[11px] text-[#c9ccd2]"><Stars /><span>(6,508)</span><span>0.6mi</span></div>
          <div className="mt-[12px] text-[12px] leading-[14px] text-[#5f6d8a]"><div>123 placeholder street. San</div><div>Francisco, CA 94115</div></div>
          <div className="flex gap-[6px] mt-[13px] overflow-hidden">
            {[0, 1, 2, 3, 4, 5].map((i) => <span key={i} className="w-[45px] h-[46px] shrink-0 bg-[#d9d9d9] rounded-[1px]" />)}
          </div>
        </At>
        <ListSquare x={1494} y={977} /><GoSquare x={1530} y={977} />

        <Label x={1604} y={897} text="segment card" purple />
        <At x={1601} y={918} w={293} h={129} className="bg-[#212a38] overflow-hidden pt-[1px] shadow-[0_0_0_1px_#56627a]">
          <Row marker={<Num />} title="Location 1 Title" n="1" />
        </At>
        <Label x={1604} y={1085} text="itinerary" />
        <At x={1603} y={1106} w={291} h={104} className="bg-white" />
        <Itin x={1603} y={1210} h={525} num white />

        <Label x={972} y={1159} text="Locatino Card" />
        <Label x={1290} y={1159} text="Locatino Card" />
        <LocCard x={971} btn="w-[145px]" dark />
        <LocCard x={1290} btn="w-[149px]" />

        {/* phones */}
        <At x={196} y={919} w={292} h={630} className="flex flex-col overflow-hidden shadow-[0_0_0_1px_#56627a] bg-[radial-gradient(ellipse_70px_70px_at_85%_14%,#3c4244,transparent),radial-gradient(ellipse_90px_70px_at_50%_22%,#3c4042,transparent),radial-gradient(ellipse_130px_70px_at_50%_94%,#2d4378,transparent),radial-gradient(ellipse_50px_40px_at_25%_83%,#3a3a3e,transparent),radial-gradient(ellipse_140px_50px_at_50%_61%,#4a5464,transparent),linear-gradient(#1f2326_0%,#303234_12%,#333437_40%,#262c38_65%,#212a38_100%)]">
          <div className="flex-1 min-h-0 pt-[252px] pl-[21px]">
            <div className="w-[250px] h-[126px] bg-[#212a38] rounded-[4px] pt-[18px] px-[26px]">
              <div className="text-[13.700px] leading-[16px] text-center text-[#e6e8ec] whitespace-nowrap">Generating your optimal itinerary</div>
              <div className="flex h-[10px] mt-[14px] rounded-full overflow-hidden bg-white"><span className="w-[46%] bg-[#3763dc]" /></div>
              <div className="flex items-center justify-center w-[176px] h-[30px] mt-[14px] ml-[11px] rounded-[4px] bg-[#3763dc] text-[12px] text-[#dbe4fa]">Cancel</div>
            </div>
          </div>
          <div className="bg-[#212a38]"><Nav /></div>
        </At>
        <At x={511} y={916} w={291} h={630} className="flex flex-col bg-[#212a38] shadow-[0_0_0_1px_#56627a]">
          <div className="flex-1 min-h-0 pt-[270px] px-[56px]">
            <div className="text-[13.700px] leading-[16px] text-center text-[#e6e8ec] whitespace-nowrap">Generating optimal itinerary</div>
            <div className="flex h-[10px] mt-[14px] rounded-full overflow-hidden bg-white"><span className="w-[46%] bg-[#3763dc]" /></div>
            <div className="flex items-center justify-center h-[30px] mt-[14px] rounded-[4px] bg-[#8090b0] text-[12px] text-[#dfe3ea]">Cancel</div>
          </div>
          <Nav />
        </At>

        {/* dropdowns */}
        <At x={413} y={1558} className="flex gap-[9px] items-start">
          <div className="flex flex-col gap-[9px]">
            <div className="flex items-center h-[36px] pl-[2px]"><Diamonds className="w-[28px] h-[28px] mr-[11px]" /><div className="flex gap-[4px] mt-[16px]"><span className="w-[4px] h-[4px] rounded-full bg-[#8b3ff0]" /><span className="w-[4px] h-[4px] rounded-full bg-[#8b3ff0]" /><span className="w-[4px] h-[4px] rounded-full bg-[#8b3ff0]" /></div></div>
            <Dropdown item="h-[20px]" bus="bg-[#8090b0] text-[#202a38]" />
          </div>
          <div className="flex flex-col gap-[9px]">
            <LabelText text="Co..." />
            <Dropdown item="h-[20.500px]" bus="font-bold text-[#333]" />
          </div>
          <div className="flex flex-col gap-[11px]">
            <LabelText text="Co..." />
            <Dropdown bus="font-bold text-[#333]" />
          </div>
          <div className="flex flex-col gap-[11px]">
            <div className="flex items-center h-[36px] pl-[2px]"><Diamonds className="w-[28px] h-[28px] mr-[11px]" /><div className="flex gap-[4px] mt-[16px]"><span className="w-[4px] h-[4px] rounded-full bg-[#8b3ff0]" /><span className="w-[4px] h-[4px] rounded-full bg-[#8b3ff0]" /><span className="w-[4px] h-[4px] rounded-full bg-[#8b3ff0]" /></div></div>
            <Dropdown />
          </div>
          <div className="flex flex-col gap-[11px] ml-[4px]">
            <LabelText text="Co..." />
            <Dropdown bg="bg-[#212a38]" caret="bg-[#212a38]" text="text-[#c3c7ce]" />
          </div>
        </At>

        {/* icon sheet */}
        <Dots x={951} y={1644} /><Dots x={1017} y={1644} /><Dots x={1083} y={1644} /><Dots x={1380} y={1644} />
        <At x={952} y={1656} w={34} h={37}><MdSwapVert className="w-full h-full text-[#111]" /></At>
        <At x={1012} y={1654} w={42} h={40}><MdOutlineDirectionsBike className="w-full h-full text-[#111]" /></At>
        <At x={1082} y={1656} w={38} h={38}><MdDirectionsWalk className="w-full h-full text-[#111]" /></At>
        <At x={1138} y={1654} w={36} h={36}><MdOutlineHail className="w-full h-full text-[#111]" /></At>
        <At x={1208} y={1658} w={37} h={36}><MdOutlineLocalTaxi className="w-full h-full text-[#111]" /></At>
        <At x={1379} y={1660} w={34} h={32}><MdOutlineStarHalf className="w-full h-full text-[#111]" /></At>
        <Dots x={1036} y={1704} /><Dots x={1157} y={1704} purple /><Dots x={1216} y={1704} /><Dots x={1332} y={1694} />
        <At x={951} y={1714} w={32} h={34}><MdOutlineTrain className="w-full h-full text-[#111]" /></At>
        <At x={993} y={1714} w={32} h={34}><MdOutlineDirectionsBus className="w-full h-full text-[#111]" /></At>
        <At x={1041} y={1723} w={22} h={24}><ChevronRight className="w-full h-full text-[#222]" strokeWidth={1.800} /></At>
        <IconLabel x={1082} y={1716} c="text-[#8090b0]" name="Search" I={SearchIcon} />
        <IconLabel x={1115} y={1715} c="text-[#333]" name="Search" I={SearchIcon} />
        <SmallPin x={1162} y={1718} /><SmallPin x={1194} y={1718} n="" fill="#fbfbfb" /><SmallPin x={1218} y={1717} w={18} h={24} stroke="#7f8eaf" /><SmallPin x={1250} y={1715} /><SmallPin x={1288} y={1715} />
        <At x={1197} y={1743} w={16} h={16}><PlayMark /></At>
        <At x={1329} y={1706} w={38} h={38}><MdOutlineVerified className="w-full h-full text-[#111]" /></At>
        <At x={1390} y={1727} w={35} h={33}><MdOutlineStarBorder className="w-full h-full text-[#111]" /></At>
        <Label x={956} y={1756} text="Navigate ..." />
        <Dots x={1089} y={1764} />
        <At x={954} y={1777}><Navigate n="1" /></At>
        <SmallPin x={1165} y={1771} w={13} h={14} />
        <At x={1224} y={1761} className="flex gap-[13px]">
          <span className="w-[39px] h-[38px] bg-[#212a38] rounded-[4px]" />
          <span className="w-[38px] h-[38px] bg-[#8090b0] rounded-[4px]" />
        </At>
        <Dots x={957} y={1810} /><Dots x={991} y={1810} />
        <ListSquare x={954} y={1822} /><GoSquare x={990} y={1822} />
        <Dots x={1378} y={1778} />
        <At x={1323} y={1798} w={35} h={33}><MdOutlineStarBorder className="w-full h-full text-[#a86a6a]" /></At>
        <At x={1377} y={1795} w={35} h={33}><MdOutlineStarBorder className="w-full h-full text-[#111]" /></At>
        <IconLabel x={1052} y={1826} c="text-[#444]" name="Map" I={MapIcon} />
        <IconLabel x={1093} y={1826} c="text-[#444]" name="Itinerary" I={ListIcon} />
        <IconLabel x={1127} y={1826} c="text-[#444]" name="Settings" I={GearIcon} />
        <Dots x={1179} y={1820} purple /><Dots x={1217} y={1820} purple /><Dots x={1258} y={1825} purple /><Dots x={1292} y={1833} purple />
        <At x={1175} y={1832} w={20} h={20} className="text-[#555]"><MapIcon className="w-full h-full" /></At>
        <At x={1214} y={1832} w={20} h={20} className="text-[#444]"><ListIcon className="w-full h-full" /></At>
        <At x={1256} y={1838} w={19} h={19} className="text-[#444]"><PawPrint className="w-full h-full" strokeWidth={1.500} /></At>
        <At x={1288} y={1847} w={19} h={19} className="text-[#555]"><GearIcon className="w-full h-full" /></At>
        <At x={1367} y={1835} w={34} h={32}><MdOutlineStarBorder className="w-full h-full text-[#111]" /></At>
        <At x={1416} y={1840} w={28} h={28}><ArrowLeft className="w-full h-full text-[#222]" strokeWidth={1.600} /></At>
        <At x={1434} y={1866} w={28} h={28}><ArrowLeft className="w-full h-full text-[#222]" strokeWidth={1.600} /></At>
        <Dots x={1322} y={1870} />
        <Dots x={1061} y={1865} purple /><Dots x={1119} y={1865} purple /><Dots x={1177} y={1865} purple /><Dots x={1244} y={1865} purple />
        <At x={1059} y={1878} className="flex items-start gap-[10px]">
          <Dashed size="w-[48px] h-[101px]" icon={SearchIcon} label="Search" />
          <Dashed size="w-[48px] h-[101px]" icon={MapIcon} label="Map" />
          <Dashed size="w-[53px] h-[108px] -ml-[2px]" icon={ListIcon} label="Itinerary" />
          <Dashed size="w-[53px] h-[101px] ml-[5px]" icon={GearIcon} label="Settings" />
        </At>
        <Dots x={1364} y={1918} purple />
        <At x={1362} y={1932} w={20} h={20}><Plus className="w-full h-full text-white" strokeWidth={1} /></At>

        <TextItem x={1469} y={1670} t="Subway" I={MdOutlineDirectionsSubway} />
        <TextItem x={1469} y={1696} t="Bus" I={MdOutlineDirectionsBus} c="text-[#3763dc]" />
        <TextItem x={1469} y={1722} t="Walk" I={MdDirectionsWalk} />
        <TextItem x={1469} y={1748} t="Bike" I={MdOutlineDirectionsBike} />
        <TextItem x={1469} y={1801} t="Rideshare" I={MdOutlineHail} />
        <TextItem x={1472} y={1853} t="Taxi" I={MdOutlineLocalTaxi} />

        <Dots x={1644} y={1773} />
        <At x={1635} y={1780} w={210} h={68} className="border border-[#8a8a8a] pt-[5px] pl-[5px] flex flex-col gap-[4px]">
          <div className="flex items-center gap-[5px] text-[11px] text-[#fbfbfb] whitespace-nowrap"><Badge t="143R" c={GREEN} /><span>Ride 6 stops to transfer</span></div>
          <div className="flex items-center gap-[5px] text-[11px] text-[#fbfbfb] whitespace-nowrap"><Badge t="15" c={PURPLE} /><span>Ride 2 stops</span></div>
        </At>
        <Label x={1654} y={1878} text="Frame 10" />
        <At x={1653} y={1900} w={158} h={41} className="flex items-center justify-between px-[6px] rounded-[5px] bg-[#d9d9d9] text-[12px] font-medium text-[#1c1c1c] whitespace-nowrap">Navigate this segment <LongArrow /></At>
        <Dots x={1783} y={1946} />
        <At x={1781} y={1959} w={30} h={37} className="flex items-center justify-center rounded-[5px] bg-[#d9d9d9] text-[#222]"><LongArrow /></At>
        <Dots x={1783} y={1990} />
        <At x={1781} y={2002} w={30} h={83} className="flex items-center justify-center rounded-[5px] bg-[#d9d9d9] text-[#222]"><LongArrow /></At>

        <At x={1380} y={1990} w={214} h={211}><Tile /></At>
        <At x={1636} y={2144} w={246} h={207}><SFMap id="land-tile" /></At>

        <Dots x={690} y={1897} /><Dots x={765} y={1874} />
        <At x={693} y={1929} w={25} className="flex flex-col gap-[2px]"><span className="h-[2px] bg-[#222]" /><span className="h-[2px] bg-[#222]" /></At>
        <At x={773} y={1894} w={15} className="grid grid-cols-2 gap-[3px]">
          {[0, 1, 2, 3, 4, 5].map((i) => <span key={i} className="w-[5px] h-[5px] rounded-full bg-[#222]" />)}
        </At>
        <Dots x={295} y={2320} /><Dots x={362} y={2320} />

        {/* right columns */}
        <At x={2241} y={183} w={553} h={464} className="shadow-[0_0_0_1px_#999]"><SFMap id="land-big" routes /></At>

        <Label x={1932} y={809} text="Start" purple />
        <At x={1932} y={832} w={292} h={103} className="bg-[#212a38] overflow-hidden shadow-[0_0_0_1px_#56627a]"><Header /></At>
        <Label x={1932} y={962} text="Finish" />
        <At x={1932} y={982} w={292} h={59} className="bg-[#212a38] pt-[12px] pl-[12px] pr-[13px] shadow-[0_0_0_1px_#56627a]"><Input className="h-[35px]">Enter end location</Input></At>
        <At x={1932} y={1087} w={292} h={89} className="bg-[#212a38] pt-[10px] pl-[12px] pr-[13px] shadow-[0_0_0_1px_#56627a]">
          <div className="text-[12px] leading-[18px] text-[#e6e8ec]">Where would you like to go?</div>
          <Input big className="h-[39px] mt-[10px]">Enter a prompt or destination</Input>
        </At>
        <Label x={1932} y={1065} text="Search" purple />
        <Label x={1932} y={1176} text="Search Results" />
        <At x={1932} y={1197} w={292} h={63} className="bg-[#212a38] pt-[12px] pl-[12px] pr-[13px] shadow-[0_0_0_1px_#56627a]"><Input big className="h-[39px]">Pizza</Input></At>
        <Label x={1932} y={1291} text="Nav" />
        <At x={1932} y={1311} w={292} h={58} className="bg-[#212a38] overflow-hidden shadow-[0_0_0_1px_#56627a]"><Nav order="smig" active="s" top={false} /></At>
        <Label x={1932} y={1372} text="Nav" purple />
        <At x={1932} y={1395} w={292} h={54} className="bg-[#212a38] overflow-hidden shadow-[0_0_0_1px_#56627a]"><Nav active="s" top={false} /></At>
        <Label x={1933} y={1500} text="Locatino Card" />
        <At x={1932} y={1521} w={291} h={136} className="bg-[#212a38] pt-[11px] pl-[21px] shadow-[0_0_0_1px_#56627a]">
          <div className="text-[18px] leading-[24px] text-[#e6e8ec]">Location 1 Title</div>
          <div className="mt-[4px] text-[12px] leading-[14px] text-[#5f6d8a]"><div>123 placeholder street. San Francisco,</div><div>CA 94115</div></div>
        </At>

        <Label x={2256} y={674} text="Segment Nav ..." purple />
        <At x={2253} y={694} w={292} h={153} className="bg-[#212a38] shadow-[0_0_0_1px_#56627a] flex flex-col pl-[12px] pr-[13px]">
          <div className="flex items-center h-[49px] shrink-0 text-[#e6e8ec]">
            <ChevronLeft className="w-[22px] h-[22px] -ml-[4px]" />
            <span className="flex-1 text-center text-[19px] pr-[6px]">Segment 1</span>
          </div>
          <div className="flex">
            <div className="flex flex-col items-center w-[12px] mr-[6px] pt-[14px]">
              <Ring /><div className="h-[35px] flex items-center"><SwapV /></div><Ring />
            </div>
            <div className="flex-1 flex flex-col gap-[7px]">
              <Input big className="h-[39px]">b.patisserie</Input>
              <Input big className="h-[39px]">Presidio Tunnel Tops</Input>
            </div>
          </div>
        </At>
        <Label x={2256} y={852} text="Detailed Nav C..." purple />
        <At x={2253} y={874} w={292} h={136} className="bg-[#212a38] shadow-[0_0_0_1px_#56627a] px-[12px] pt-[8px]">
          <div className="flex items-center h-[24px] text-[#e6e8ec]">
            <MdOutlineDirectionsBus className="w-[20px] h-[20px] -ml-[2px] mr-[9px]" />
            <span className="text-[18px] flex-1">Location 1 Title</span>
            <span className="text-[18px] mr-[1px]">16min</span>
          </div>
          <div className="flex items-center mt-[8px] h-[17px] text-[12px] text-[#dfe2e7]">
            <span className="flex items-center justify-center w-[40px] h-[17px] bg-[#e8792c] text-[11px] rounded-[2px]">43</span>
            <span className="ml-[13px]">$3.00</span>
            <span className="ml-[14px]">Every 12min</span>
          </div>
          <div className="mt-[10px] text-[12px] leading-[14px] text-[#5f6d8a] whitespace-nowrap">From Presidio Ave &amp; California St.</div>
          <div className="flex items-center mt-[11px] text-[11px] leading-[14px] text-[#e6e8ec]">More Details <ChevronRight className="w-[11px] h-[11px]" /></div>
          <div className="absolute right-[16px] top-[57px] flex items-center justify-center w-[60px] h-[60px] rounded-full bg-[#3763dc] text-white">
            <MdPlayArrow className="w-[50px] h-[50px]" />
          </div>
        </At>
        <At x={2560} y={694} w={291} h={89} className="bg-[#212a38] pt-[10px] pl-[12px] pr-[13px] shadow-[0_0_0_1px_#56627a]">
          <div className="text-[12px] leading-[18px] text-[#e6e8ec]">Where would you like to go?</div>
          <Input big className="h-[39px] mt-[10px]">Enter a prompt or destination</Input>
        </At>
        <At x={2560} y={805} w={291} h={104} className="bg-[#212a38] overflow-hidden shadow-[0_0_0_1px_#56627a]"><Header /></At>
        <At x={2250} y={1049} w={292} h={104} className="bg-[#212a38] overflow-hidden shadow-[0_0_0_1px_#56627a]"><Header /></At>
        <At x={2250} y={1157} w={292} h={521} className="flex flex-col bg-[#212a38] overflow-hidden shadow-[0_0_0_1px_#56627a]">
          <div className="relative flex-1 min-h-0 overflow-hidden">
            <div className="-ml-[165px] w-[553px] h-[464px]"><SFMap id="land-mini" routes four /></div>
            <div className="absolute left-[13px] top-[228px] w-[266px] h-[118px] bg-white rounded-[2px]">
              <span className="absolute -top-[4px] left-[128px] w-[9px] h-[9px] bg-white rotate-45" />
            </div>
          </div>
          <Nav active="m" />
        </At>

        <Label x={2586} y={947} text="detail" purple />
        <Detail x={2583} y={968} h={679} />

        <Label x={1936} y={1699} text="itinerary" />
        <Itin x={1936} y={1721} h={630} num />
        <Label x={2265} y={1706} text="itinerary - change ..." />
        <Itin x={2265} y={1726} h={630} num menu />
        <Label x={2582} y={1706} text="swap transportation" />
        <Detail x={2581} y={1726} h={630} nav menu />
      </div>
    </div>
  );
}
